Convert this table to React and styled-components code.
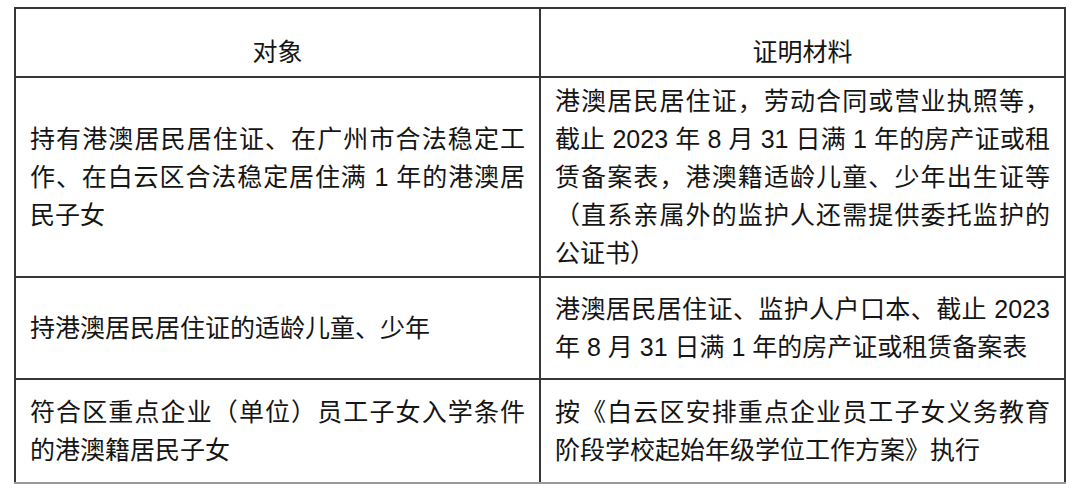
import React from 'react';
import styled, { createGlobalStyle } from 'styled-components';

const GlobalStyle = createGlobalStyle`
  html, body {
    margin: 0;
    padding: 0;
    background: #ffffff;
  }
  body {
    font-family: "Liberation Sans", "Noto Sans CJK SC", sans-serif;
    color: #151515;
  }
`;

const PageStyle = styled.div`
  padding: 7px 14px 0 14px;
`;

const TableStyle = styled.table`
  width: 1052px;
  border-collapse: collapse;
  table-layout: fixed;
  font-size: 25px;
  line-height: 38px;
  td,
  th {
    box-sizing: border-box;
    border: 2px solid #363636;
    padding: 0 14px;
    vertical-align: middle;
  }
  tr:last-child td {
    border-bottom-color: #9a9a9a;
  }
`;

const HeadRow = styled.tr`
  height: 69px;
`;

const HeadCell = styled.th`
  font-weight: normal;
  text-align: center;
  && {
    vertical-align: bottom;
    padding-top: 0;
    padding-bottom: 5px;
  }
`;

const Row = styled.tr`
  height: ${(props) => props.$h}px;
`;

const Cell = styled.td`
  text-align: justify;
  text-justify: inter-character;
`;

const rows = [
  {
    h: 200,
    who: '持有港澳居民居住证、在广州市合法稳定工作、在白云区合法稳定居住满 1 年的港澳居民子女',
    doc: '港澳居民居住证，劳动合同或营业执照等，截止 2023 年 8 月 31 日满 1 年的房产证或租赁备案表，港澳籍适龄儿童、少年出生证等（直系亲属外的监护人还需提供委托监护的公证书）',
  },
  {
    h: 102,
    who: '持港澳居民居住证的适龄儿童、少年',
    doc: '港澳居民居住证、监护人户口本、截止 2023 年 8 月 31 日满 1 年的房产证或租赁备案表',
  },
  {
    h: 104,
    who: '符合区重点企业（单位）员工子女入学条件的港澳籍居民子女',
    doc: '按《白云区安排重点企业员工子女义务教育阶段学校起始年级学位工作方案》执行',
  },
];

function App() {
  return (
    <PageStyle>
      <GlobalStyle />
      <TableStyle>
        <colgroup>
          <col style={{ width: '50%' }} />
          <col style={{ width: '50%' }} />
        </colgroup>
        <thead>
          <HeadRow>
            <HeadCell>对象</HeadCell>
            <HeadCell>证明材料</HeadCell>
          </HeadRow>
        </thead>
        <tbody>
          {rows.map((row) => (
            <Row key={row.who} $h={row.h}>
              <Cell>{row.who}</Cell>
              <Cell>{row.doc}</Cell>
            </Row>
          ))}
        </tbody>
      </TableStyle>
    </PageStyle>
  );
}

export default App;
